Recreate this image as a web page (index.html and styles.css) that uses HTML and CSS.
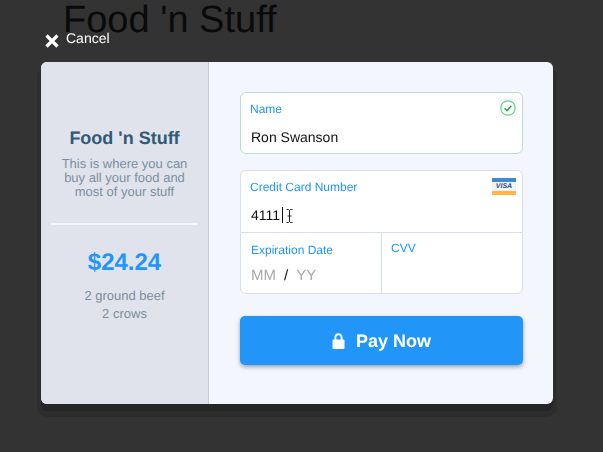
FILE: index.html
```html
<!DOCTYPE html>
<html lang="en">
<head>
<meta charset="utf-8">
<title>Food 'n Stuff</title>
<link rel="stylesheet" href="styles.css">
</head>
<body>
<h1 class="page-title">Food 'n Stuff</h1>
<div class="overlay">
  <button class="cancel" type="button">
    <svg class="cancel-icon" width="16" height="16" viewBox="0 0 16 16"><path d="M2.5 2.5 L13.5 13.5 M13.5 2.5 L2.5 13.5" stroke="#fff" stroke-width="3.2" fill="none"/></svg>
    <span class="cancel-text">Cancel</span>
  </button>
  <div class="modal">
    <aside class="summary">
      <div class="merchant">
        <h2 class="merchant-name">Food 'n Stuff</h2>
        <p class="merchant-desc">This is where you can buy all your food and most of your stuff</p>
      </div>
      <div class="order">
        <div class="price">$24.24</div>
        <p class="items">2 ground beef<br>2 crows</p>
      </div>
    </aside>
    <form class="checkout">
      <div class="field-box valid">
        <div class="cell">
          <label class="label">Name</label>
          <div class="value">Ron Swanson</div>
          <svg class="check" width="16" height="16" viewBox="0 0 16 16"><circle cx="8" cy="8" r="7.2" fill="#fff" stroke="#5fcf8b" stroke-width="1.2"/><path d="M4.6 8.2 L7 10.6 L11.4 5.8" fill="none" stroke="#2da14f" stroke-width="1.5"/></svg>
        </div>
      </div>
      <div class="field-box card">
        <div class="cell number">
          <label class="label">Credit Card Number</label>
          <div class="value">4111<span class="caret"></span></div>
          <svg class="ibeam" width="7" height="14" viewBox="0 0 7 14"><path d="M0.5 0.5 H2.5 L3.5 1.5 L4.5 0.5 H6.5 M3.5 1.5 V12.5 M0.5 13.5 H2.5 L3.5 12.5 L4.5 13.5 H6.5 M1.5 7 H5.5" fill="none" stroke="#222" stroke-width="1"/></svg>
          <div class="visa"><span class="visa-mid">VISA</span></div>
        </div>
        <div class="row">
          <div class="cell expiry">
            <label class="label">Expiration Date</label>
            <div class="value date"><span class="ph">MM</span><span class="slash">/</span><span class="ph">YY</span></div>
          </div>
          <div class="cell cvv">
            <label class="label">CVV</label>
          </div>
        </div>
      </div>
      <button class="pay" type="button">
        <svg class="lock" width="13" height="16" viewBox="0 0 13 16"><path d="M3.4 7 V4.4 a3.1 3.1 0 0 1 6.2 0 V7" fill="none" stroke="#fff" stroke-width="1.9"/><rect x="0.5" y="6.5" width="12" height="9.5" rx="1" fill="#fff"/></svg>
        <span>Pay Now</span>
      </button>
    </form>
  </div>
</div>
</body>
</html>
```
FILE: styles.css
```css
* { box-sizing: border-box; }
html, body { margin: 0; height: 100%; }
body {
  background: #333333;
  font-family: "Liberation Sans", Arial, sans-serif;
  text-rendering: geometricPrecision;
  overflow: hidden;
}
.page-title {
  margin: 0;
  padding: 0 0 0 63px;
  font-size: 38px;
  line-height: 41px;
  font-weight: 400;
  color: #0a0a0a;
}
.overlay {
  position: fixed;
  inset: 0;
  padding: 30px 50px 0 41px;
}
.cancel {
  display: flex;
  align-items: flex-start;
  gap: 6px;
  height: 32px;
  padding: 1px 0 0 3px;
  border: 0;
  background: none;
  color: #fff;
  text-rendering: geometricPrecision;
  font: 14px/14px "Liberation Sans", Arial, sans-serif;
}
.cancel-icon { margin-top: 2px; }
.modal {
  display: flex;
  width: 512px;
  height: 342px;
  border-radius: 6px;
  background: #f3f6fc;
  box-shadow: 0 7px 0 0 #262626, 0 9px 0 4px #2d2d2d;
  overflow: hidden;
}
.summary {
  flex: 0 0 168px;
  padding: 66px 10px 0;
  background: #e0e3eb;
  border-right: 1px solid #c3cbdb;
  text-align: center;
}
.merchant {
  padding-bottom: 24px;
  border-bottom: 2px solid #f3f6fc;
}
.merchant-name {
  margin: 0 0 8px;
  font-size: 18px;
  line-height: 21px;
  color: #305a78;
  font-weight: 700;
}
.merchant-desc {
  margin: 0;
  padding: 0 8px;
  font-size: 13px;
  line-height: 14px;
  color: #7b8fa2;
}
.order { padding-top: 24px; }
.price {
  font-size: 24px;
  line-height: 28px;
  font-weight: 700;
  color: #2196f8;
}
.items {
  margin: 10px 0 0;
  font-size: 13px;
  line-height: 18px;
  color: #7f8d9c;
}
.checkout {
  flex: 1;
  padding: 30px 30px 0 31px;
}
.field-box {
  background: #fff;
  border: 1px solid #d6dfea;
  border-radius: 6px;
}
.field-box.valid {
  height: 62px;
  border-color: #b8e0c8;
  margin-bottom: 16px;
}
.field-box.card { height: 124px; }
.cell { position: relative; padding: 9px 10px 0 9px; }
.number { height: 62px; border-bottom: 1px solid #d6dfea; }
.label {
  display: block;
  font-size: 12px;
  line-height: 14px;
  color: #2196f8;
}
.value {
  margin-top: 13px;
  margin-left: 1px;
  font-size: 14px;
  line-height: 16px;
  color: #111;
}
.caret {
  display: inline-block;
  width: 1px;
  height: 16px;
  margin-left: 2px;
  background: #111;
  vertical-align: -3px;
}
.check { position: absolute; top: 7px; right: 6px; }
.ibeam { position: absolute; left: 45px; top: 38px; }
.visa {
  position: absolute;
  top: 7px;
  right: 6px;
  width: 24px;
  height: 17px;
  background: linear-gradient(#4088d0 0 4px, #f2f3f5 4px 13px, #ffb54a 13px 17px);
  text-align: center;
}
.visa-mid {
  display: block;
  padding-top: 4px;
  font-size: 7px;
  line-height: 9px;
  font-weight: 700;
  font-style: italic;
  color: #2b4a85;
}
.row { display: flex; height: 60px; }
.expiry { flex: 0 0 141px; border-right: 1px solid #d6dfea; padding-left: 10px; padding-top: 10px; }
.cvv { flex: 1; padding-top: 8px; }
.date { margin-top: 10px; margin-left: 0; font-size: 15px; line-height: 17px; display: flex; }
.ph { color: #aaa; }
.slash { margin: 0 8px; color: #111; }
.pay {
  display: flex;
  align-items: center;
  justify-content: center;
  gap: 11px;
  width: 283px;
  height: 49px;
  margin-top: 22px;
  border: 0;
  border-radius: 5px;
  background: #2196f8;
  color: #fff;
  text-rendering: geometricPrecision;
  font: 700 18px/20px "Liberation Sans", Arial, sans-serif;
  box-shadow: 0 2px 4px rgba(0, 0, 0, 0.35);
}
```
